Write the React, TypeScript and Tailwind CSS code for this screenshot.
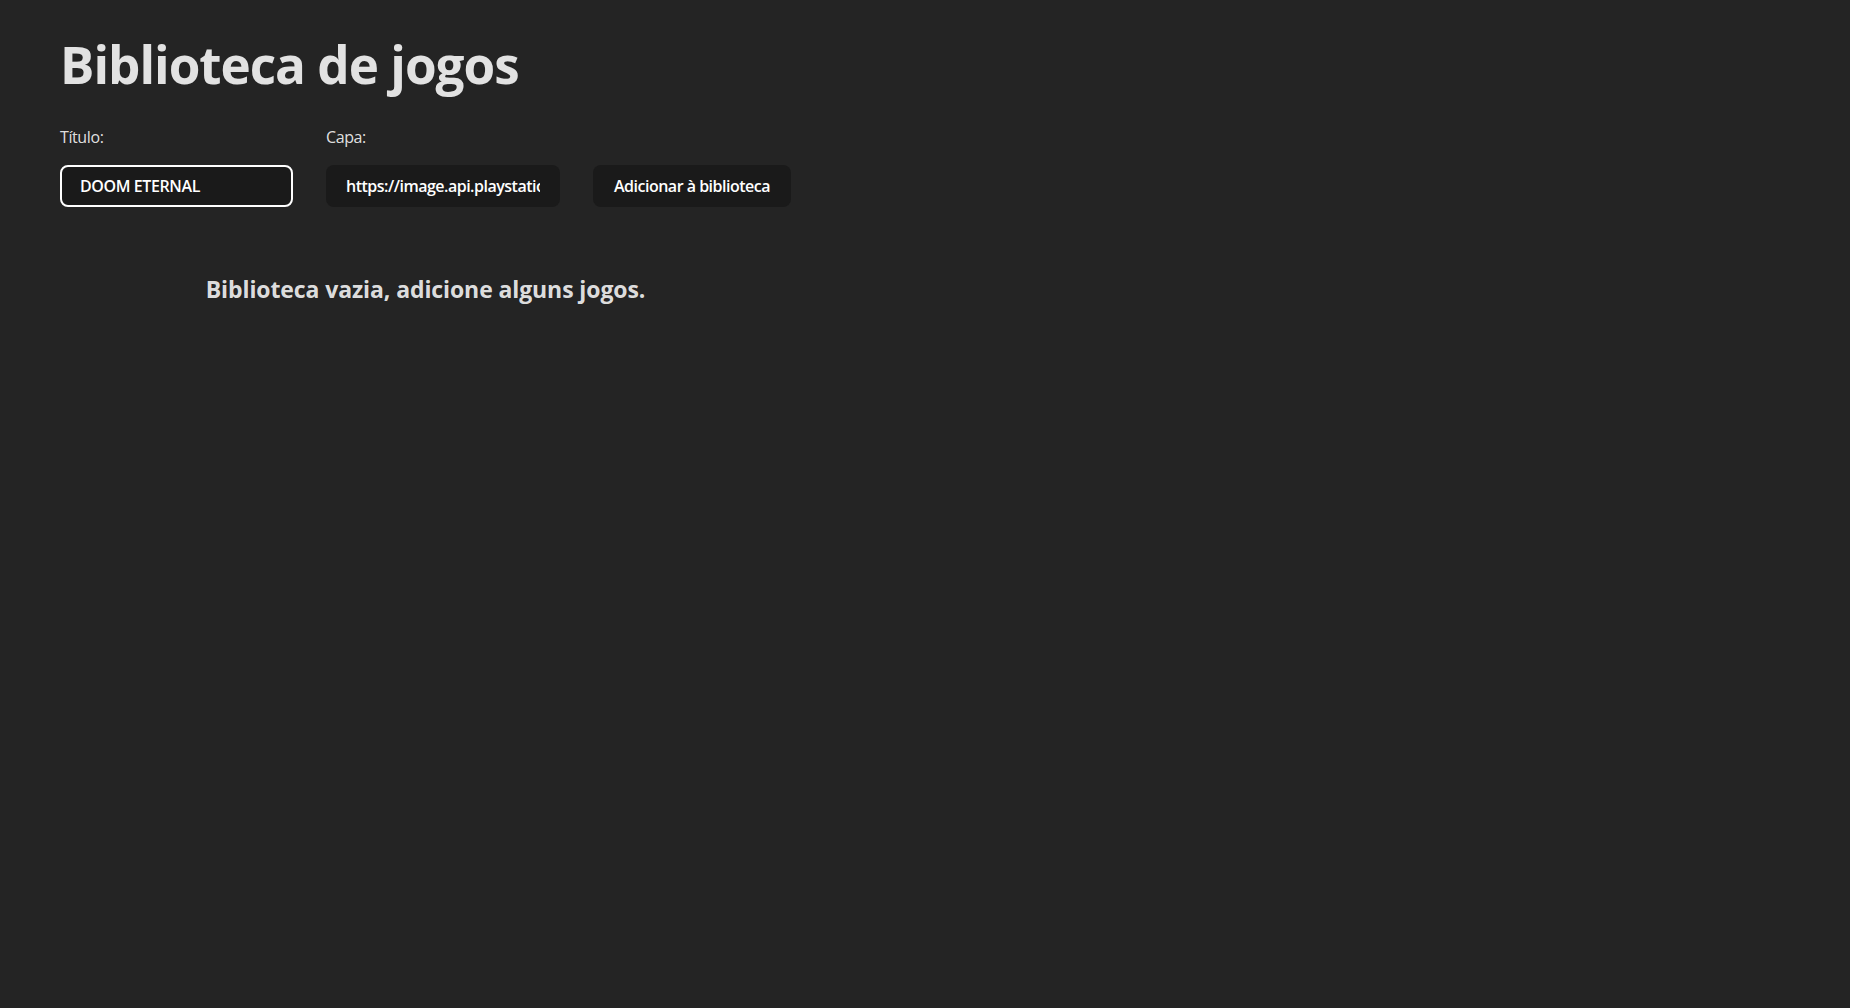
import { useState } from 'react'

const FONT = "font-['Open_Sans',sans-serif]"

export default function App() {
  const [title, setTitle] = useState('DOOM ETERNAL')
  const [cover, setCover] = useState(
    'https://image.api.playstation.com/vulcan/ap/rnd/202010/0114/ERNPc4gFqeRDG1tYQIfOKQtM.png'
  )

  return (
    <div className={`min-h-screen bg-[#242424] text-white/[0.87] ${FONT}`}>
      <div className="w-fit px-[60px]">
        <h1 className="pt-[36px] pb-[33px] text-[51.2px] font-bold leading-[1.1] tracking-[-1px]">
          Biblioteca de jogos
        </h1>

        {/* form */}
        <form
          className="flex items-end gap-[33px]"
          onSubmit={(e) => e.preventDefault()}
        >
          <div className="flex flex-col gap-4">
            <label htmlFor="title" className="text-base leading-6 tracking-[-0.4px]">
              Título:
            </label>
            <input
              id="title"
              autoFocus
              value={title}
              onChange={(e) => setTitle(e.target.value)}
              className="w-[233px] h-[42px] rounded-lg border-2 border-white bg-[#1a1a1a] px-[18px] text-base font-semibold tracking-[-0.4px] text-white outline-none caret-white"
            />
          </div>
          <div className="flex flex-col gap-4">
            <label htmlFor="cover" className="text-base leading-6 tracking-[-0.4px]">
              Capa:
            </label>
            <input
              id="cover"
              value={cover}
              onChange={(e) => setCover(e.target.value)}
              className="w-[234px] h-[42px] rounded-lg border border-transparent bg-[#1a1a1a] px-[19px] text-base font-semibold tracking-[-0.5px] text-white outline-none"
            />
          </div>
          <button
            type="submit"
            className="h-[42px] w-[198px] rounded-lg border border-transparent bg-[#1a1a1a] text-base font-semibold tracking-[-0.5px] text-white"
          >
            Adicionar à biblioteca
          </button>
        </form>

        <h2 className="mt-[64px] text-center text-[23px] font-bold leading-9 tracking-[-0.1px]">
          Biblioteca vazia, adicione alguns jogos.
        </h2>
      </div>
    </div>
  )
}
